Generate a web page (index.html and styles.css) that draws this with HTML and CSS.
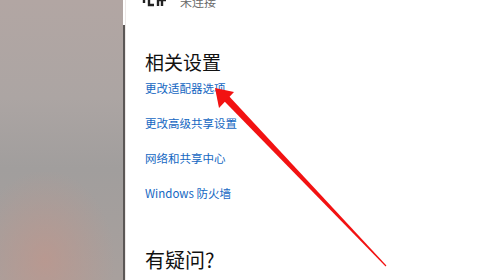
FILE: index.html
```html
<!DOCTYPE html>
<html lang="zh-CN">
<head>
<meta charset="utf-8">
<link rel="stylesheet" href="styles.css">
</head>
<body>
<div class="screen">
  <div class="blur"></div>
  <div class="divider"></div>
  <div class="content">
    <div class="status">
      <svg class="net-icon" width="26" height="8" viewBox="0 0 26 8">
        <path d="M2 0 L2 3 M7 0 L7 5 L12 5 M16 0 L16 6 M16 0 L24 0 M20 0 L20 6" stroke="#222" stroke-width="2.4" fill="none"/>
      </svg>
      <span class="status-text">未连接</span>
    </div>
    <h2 class="heading">相关设置</h2>
    <a class="link first">更改适配器选项</a>
    <a class="link">更改高级共享设置</a>
    <a class="link">网络和共享中心</a>
    <a class="link">Windows 防火墙</a>
    <h2 class="heading question">有疑问?</h2>
  </div>
  <svg class="arrow" width="500" height="280" viewBox="0 0 500 280">
    <polygon points="223.6,100.4 228.4,95.6 386.4,265.6 385.6,266.4" fill="#f21212"/>
    <polygon points="215,88 234,92 219,108" fill="#f21212"/>
  </svg>
</div>
</body>
</html>
```
FILE: styles.css
```css
html, body {
  margin: 0;
  padding: 0;
}
body {
  width: 500px;
  height: 280px;
  overflow: hidden;
  background: #fff;
  font-family: "Noto Sans CJK SC", "Noto Sans", sans-serif;
}
.screen {
  position: relative;
  display: flex;
  width: 500px;
  height: 280px;
}
.blur {
  width: 123px;
  flex: none;
  background:
    radial-gradient(ellipse 70px 90px at 45px 260px, rgba(190,150,140,0.75), rgba(190,150,140,0) 100%),
    linear-gradient(180deg, #b2a6a3 0%, #aca5a3 35%, #a19e9d 60%, #a8a09d 100%);
}
.divider {
  width: 2px;
  flex: none;
  margin-top: 25px;
  background: #5b5756;
}
.divider + .content {
  border-left: 1px solid #ece8e7;
}
.content {
  flex: 1;
  display: flex;
  flex-direction: column;
  align-items: flex-start;
  padding-left: 19px;
  background: #fff;
}
.status {
  display: flex;
  align-items: flex-start;
  gap: 12px;
  height: 14px;
  margin-top: -5px;
}
.net-icon {
  margin-top: 5px;
  margin-left: -3px;
}
.status-text {
  font-size: 12px;
  line-height: 14px;
  color: #6a6a6a;
}
.heading {
  margin: 41px 0 0 0;
  font-size: 19px;
  line-height: 24px;
  font-weight: 400;
  color: #111;
}
.link {
  display: block;
  font-size: 11.5px;
  line-height: 20px;
  color: #1467c2;
  margin-top: 15px;
}
.link.first {
  margin-top: 4px;
}
.question {
  margin-top: 44px;
  font-size: 20px;
  line-height: 26px;
}
.arrow {
  position: absolute;
  left: 0;
  top: 0;
  pointer-events: none;
}
```
